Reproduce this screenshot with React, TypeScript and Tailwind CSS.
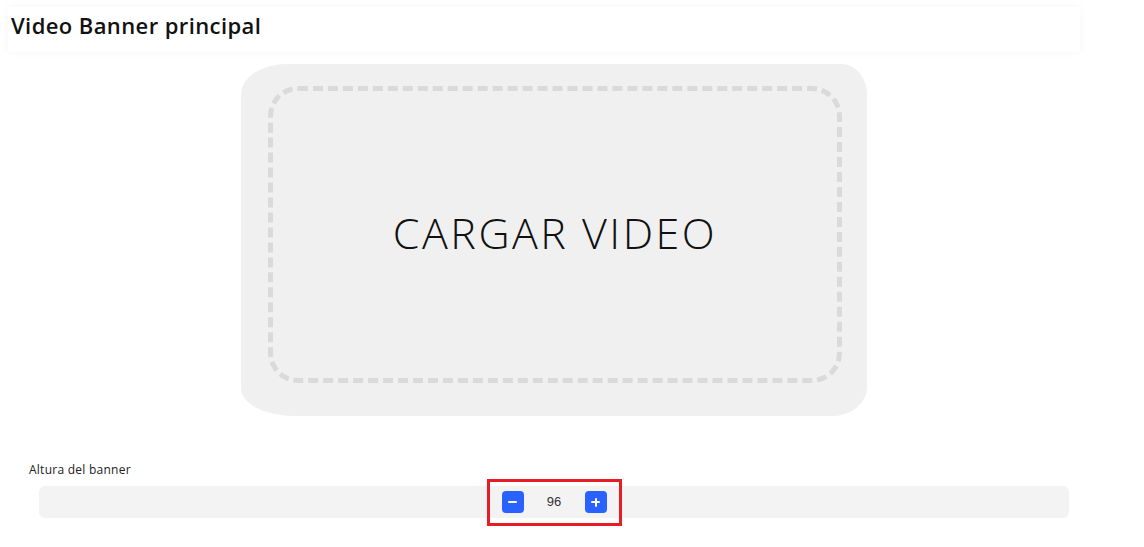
const App = () => {
  return (
    <div className="min-h-[547px] w-[1144px] bg-white font-['Open_Sans',_'Noto_Sans',_sans-serif] text-black">
      <div className="pt-[7px] pl-[8px] w-[1080px]">
        <div className="h-[45px] bg-white shadow-[0_0_8px_rgba(0,0,0,0.045)] pt-[5px]">
          <h1 className="pl-[3px] text-[22px] leading-[27px] font-semibold tracking-[0.4px] text-[#111]">Video Banner principal</h1>
        </div>
      </div>

      <div className="w-[1030px] ml-[39px]">
        <div className="flex justify-center mt-[12px]">
          <div className="w-[626px] h-[352px] bg-[#f0f0f0] rounded-[46px_26px_34px_52px/30px_30px_29px_28px] pl-[27px] pr-[25px] pt-[22px] pb-[33px]">
            <div className="h-full border-[5px] border-dashed border-[#dadada] rounded-[30px] flex items-center justify-center cursor-pointer">
              <span className="text-[43px] font-light leading-none tracking-[2.5px] text-[#111] -mt-[4px]">CARGAR VIDEO</span>
            </div>
          </div>
        </div>
      </div>

      <div className="mt-[46px] pl-[29px] text-[12px] leading-[15px] tracking-[0.25px] text-[#222]">Altura del banner</div>

      <div className="ml-[39px] mt-[9px] w-[1030px] h-[32px] bg-[#f3f3f3] rounded-[6px] flex items-center justify-center">
        <div className="h-[47px] w-[135px] border-[3px] border-[#e81c24] flex items-center justify-between px-[12px]">
          <button className="w-[22px] h-[22px] rounded-[4px] bg-[#2962ff] flex items-center justify-center">
            <span className="block w-[9px] h-[2px] bg-white rounded-full" />
          </button>
          <span className="text-[13px] text-[#333] font-['Liberation_Sans',_sans-serif]">96</span>
          <button className="w-[22px] h-[22px] rounded-[4px] bg-[#2962ff] flex items-center justify-center relative">
            <span className="block w-[9px] h-[2px] bg-white rounded-full" />
            <span className="absolute block w-[2px] h-[9px] bg-white rounded-full" />
          </button>
        </div>
      </div>
    </div>
  )
}

export default App
